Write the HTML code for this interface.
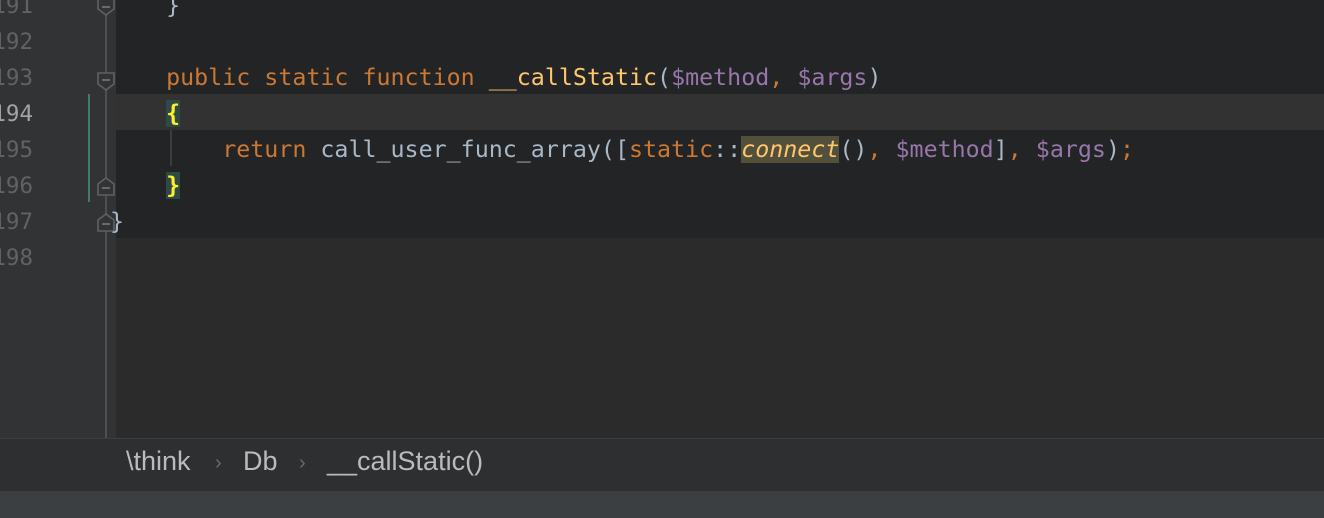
<!DOCTYPE html>
<html><head><style>
body{margin:0;width:1324px;height:518px;overflow:hidden;background:#2b2b2c;position:relative;font-family:"DejaVu Sans Mono",monospace}
.gut{position:absolute;left:0;top:0;width:116px;height:438px;background:#313335}
.codebg{position:absolute;left:116px;top:0;right:0;height:238px;background:#222426}
.hl{position:absolute;left:116px;right:0;top:94px;height:36px;background:#323232}
.ln{position:absolute;font-size:22.5px;color:#606366;line-height:36px;text-align:right;width:60px;left:-27px}
.code{position:absolute;left:110px;font-size:23.3px;line-height:36px;white-space:pre;color:#a9b7c6}
.k{color:#cc7832}.f{color:#ffc66d}.v{color:#9876aa}
.br{background:#2f4a46;color:#ffef28;font-weight:bold}
.bar{position:absolute;left:0;top:438px;width:1324px;height:53px;background:#2e2f31;border-top:1px solid #3b3d3f;box-sizing:border-box}
.bot{position:absolute;left:0;top:491px;width:1324px;height:27px;background:#3b3f42}
.crumb{position:absolute;top:446px;font-family:"Liberation Sans",sans-serif;font-size:27px;color:#bbbbbb}
.sep{position:absolute;top:452px;font-family:"Liberation Sans",sans-serif;font-size:20px;color:#6a6a6a}
</style></head><body>
<div class="gut"></div>
<div class="codebg"></div>
<div class="hl"></div>
<div style="position:absolute;left:105px;top:0;width:2px;height:438px;background:#4d4f51"></div>
<div style="position:absolute;left:88px;top:94px;width:2px;height:108px;background:#447a6c"></div>
<svg style="position:absolute;left:96px;top:0" width="22" height="240">
<g fill="#313335" stroke="#5f6163" stroke-width="1.6">
<path d="M2,-4 H18 V9 L10,15 L2,9 Z"/>
<path d="M2,73 H18 V84 L10,90 L2,84 Z"/>
<path d="M2,184 L10,178 L18,184 V195 H2 Z"/>
<path d="M2,220 L10,214 L18,220 V231 H2 Z"/>
</g>
<g stroke="#7a7c7e" stroke-width="1.6"><path d="M6,7 H14 M6,80 H14 M6,188 H14 M6,224 H14"/></g>
</svg>
<div style="position:absolute;left:170px;top:130px;width:2px;height:36px;background:#3b3d3d"></div>
<div class="ln" style="top:-12px">191</div>
<div class="ln" style="top:24px">192</div>
<div class="ln" style="top:60px">193</div>
<div class="ln" style="top:96px;color:#a4a3a3">194</div>
<div class="ln" style="top:132px">195</div>
<div class="ln" style="top:168px">196</div>
<div class="ln" style="top:204px">197</div>
<div class="ln" style="top:240px">198</div>
<div class="code" style="top:-12px">    }</div>
<div class="code" style="top:60px">    <span class="k">public static function </span><span class="f">__callStatic</span>(<span class="v">$method</span><span class="k">, </span><span class="v">$args</span>)</div>
<div class="code" style="top:94px;line-height:36px"><span style="position:relative;top:2px">    <span class="br">{</span></span></div>
<div class="code" style="top:132px">        <span class="k">return </span>call_user_func_array([<span class="k">static</span>::<span class="f" style="font-style:italic;background:#52503a">connect</span>()<span class="k">, </span><span class="v">$method</span>]<span class="k">, </span><span class="v">$args</span>)<span class="k">;</span></div>
<div class="code" style="top:168px">    <span class="br">}</span></div>
<div class="code" style="top:204px">}</div>
<div class="bar"></div>
<div class="bot"></div>
<div class="crumb" style="left:126px">\think</div>
<div class="sep" style="left:215px">›</div>
<div class="crumb" style="left:243px">Db</div>
<div class="sep" style="left:299px">›</div>
<div class="crumb" style="left:327px">__callStatic()</div>
</body></html>
